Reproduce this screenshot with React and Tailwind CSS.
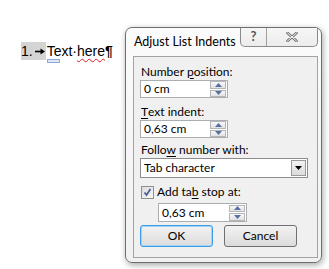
import React from "react";

const F = { fontFamily: '"Lato", "Liberation Sans", sans-serif' };

function Spin() {
  return (
    <div className="flex flex-col w-[16px] h-[16px] ml-auto">
      <div className="flex-1 flex items-center justify-center border border-[#b6b6b6] bg-gradient-to-b from-[#f8f8f8] to-[#e2e2e2] mb-[1px]">
        <svg width="7" height="4" viewBox="0 0 7 4"><path d="M0 4 L3.5 0 L7 4 Z" fill="#5a6fa8" /></svg>
      </div>
      <div className="flex-1 flex items-center justify-center border border-[#b6b6b6] bg-gradient-to-b from-[#f8f8f8] to-[#e2e2e2]">
        <svg width="7" height="4" viewBox="0 0 7 4"><path d="M0 0 L3.5 4 L7 0 Z" fill="#5a6fa8" /></svg>
      </div>
    </div>
  );
}

function Input({ value, w, h = "h-[18px]" }) {
  return (
    <div className={`flex items-center ${w} ${h} border border-[#aaadb2] bg-white pl-[3px] pr-[1px] text-[12px] text-black`}>
      <span>{value}</span>
      <Spin />
    </div>
  );
}

export default function App() {
  return (
    <div className="w-[329px] h-[269px] bg-white flex overflow-hidden" style={F}>
      <div className="w-[125px] shrink-0 pl-[21px] pt-[42px]">
        <div className="flex items-center h-[18px] text-[14px] text-black leading-none" style={{ fontFamily: '"Liberation Sans", sans-serif' }}>
          <span className="bg-[#d4d4d4] h-[18px] flex items-center pr-[1px]">
            1.
            <svg className="ml-[2px]" width="10" height="7" viewBox="0 0 10 7">
              <path d="M0 3.5 H6" stroke="#000" strokeWidth="1.6" />
              <path d="M5.5 0.5 L10 3.5 L5.5 6.5 Z" fill="#000" />
            </svg>
          </span>
          <span className="relative ml-[1px]">
            Text·
            <span className="absolute left-[0px] top-[15px] w-[13px] h-[4px] border border-[#8fa7d8] bg-[#dfe7f7]"></span>
          </span>
          <span className="underline decoration-wavy decoration-[#e02020] decoration-[1px] underline-offset-[2px]">here</span>
          <span className="font-bold">¶</span>
        </div>
      </div>
      <div className="mt-[27px] w-[197px] h-[236px] shrink-0 rounded-[7px] border border-[#6e6e6e] bg-gradient-to-b from-[#fbfbfb] to-[#f1f1f1] shadow-[1px_2px_6px_rgba(0,0,0,0.35)] flex flex-col">
        <div className="h-[28px] flex items-start">
          <div className="pl-[8px] pt-[5px] text-[12.5px] text-black">Adjust List Indents</div>
          <div className="ml-auto mr-[3px] flex h-[19px] border border-t-0 border-[#8a8a8a] rounded-b-[5px] bg-gradient-to-b from-[#f6f6f6] to-[#ececec]">
            <div className="w-[26px] flex items-center justify-center border-r border-[#a0a0a0] text-[13px] text-[#555] font-bold">?</div>
            <div className="w-[50px] flex items-center justify-center">
              <svg width="12" height="10" viewBox="0 0 12 10">
                <path d="M1.5 1 L10.5 9 M10.5 1 L1.5 9" stroke="#707070" strokeWidth="2.6" strokeLinecap="round" />
                <path d="M1.5 1 L10.5 9 M10.5 1 L1.5 9" stroke="#fafafa" strokeWidth="1" strokeLinecap="round" />
              </svg>
            </div>
          </div>
        </div>
        <div className="ml-[7px] mr-[3px] h-[202px] border border-[#a3a3a3] bg-[#f0f0f0] pl-[6px] pt-[6px] flex flex-col text-[12px] text-black leading-none">
          <div className="h-[17px] pl-[1px] flex items-center">Number <span className="underline underline-offset-[2px] ml-[3px]">p</span>osition:</div>
          <Input value="0 cm" w="w-[88px]" />
          <div className="h-[17px] mt-[5px] pl-[1px] flex items-center"><span className="underline underline-offset-[2px]">T</span>ext indent:</div>
          <Input value="0,63 cm" w="w-[88px]" />
          <div className="h-[17px] mt-[3px] pl-[1px] flex items-center">Follo<span className="underline underline-offset-[2px]">w</span>&nbsp;number with:</div>
          <div className="w-[168px] h-[20px] border border-[#8d8d8d] bg-white flex items-center pl-[3px]">
            <span>Tab character</span>
            <div className="ml-auto mr-[1px] w-[15px] h-[16px] border border-[#9a9a9a] bg-gradient-to-b from-[#f2f2f2] to-[#dcdcdc] flex items-center justify-center">
              <svg width="7" height="4" viewBox="0 0 7 4"><path d="M0 0 L3.5 4 L7 0 Z" fill="#000" /></svg>
            </div>
          </div>
          <div className="mt-[7px] h-[14px] flex items-center">
            <div className="w-[13px] h-[13px] ml-[1px] border border-[#8e8f8f] bg-gradient-to-br from-[#dcdcdc] to-[#f8f8f8] flex items-center justify-center">
              <svg width="9" height="9" viewBox="0 0 9 9"><path d="M1.5 4.5 L3.5 7 L7.5 1" stroke="#4a5f97" strokeWidth="1.8" fill="none" /></svg>
            </div>
            <span className="ml-[3px]">Add ta<span className="underline underline-offset-[2px]">b</span> stop at:</span>
          </div>
          <div className="mt-[4px] ml-[18px]"><Input value="0,63 cm" w="w-[89px]" h="h-[19px]" /></div>
          <div className="mt-[3px] flex gap-[11px]">
            <div className="w-[73px] h-[22px] rounded-[3px] border border-[#3c9ae8] bg-gradient-to-b from-[#f2f2f2] to-[#dcdcdc] shadow-[inset_0_0_0_1px_#9fd5f5] flex items-center justify-center">OK</div>
            <div className="w-[73px] h-[22px] rounded-[3px] border border-[#707070] bg-gradient-to-b from-[#f2f2f2] to-[#dcdcdc] flex items-center justify-center">Cancel</div>
          </div>
        </div>
      </div>
    </div>
  );
}
